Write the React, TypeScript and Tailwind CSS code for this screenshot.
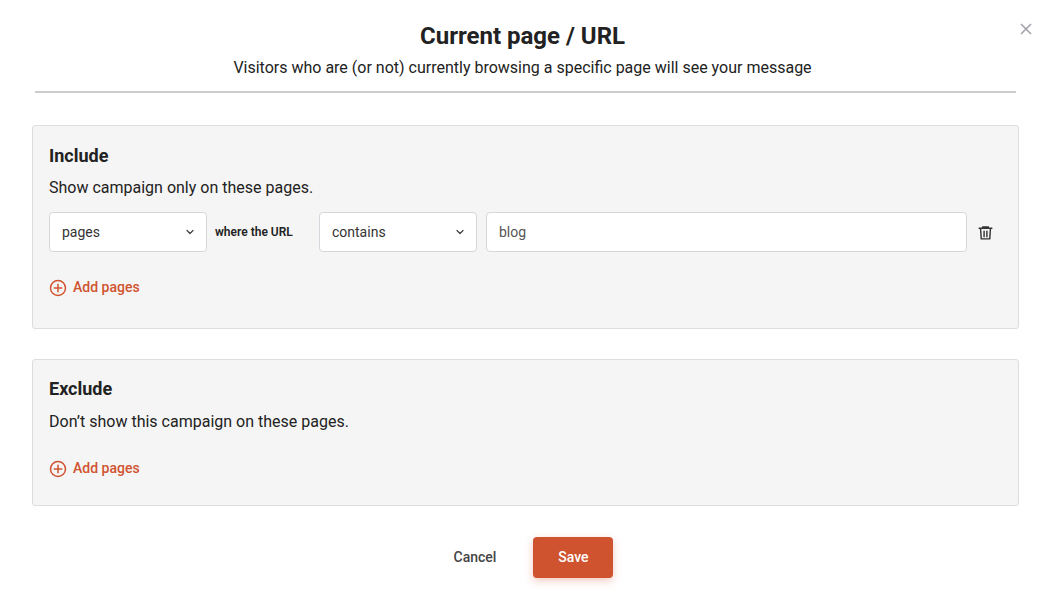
import React from "react";

const Chevron = () => (
  <svg width="12" height="12" viewBox="0 0 24 24" fill="none" stroke="#444" strokeWidth="2.5" strokeLinecap="round" strokeLinejoin="round"><path d="M6 9l6 6 6-6" /></svg>
);

const AddPages = () => (
  <button className="flex items-center gap-[6px] text-[14px] font-medium text-[#d05330]">
    <svg width="18" height="18" viewBox="0 0 24 24" fill="none" stroke="#d05330" strokeWidth="2" strokeLinecap="round"><circle cx="12" cy="12" r="10" /><path d="M12 7v10M7 12h10" /></svg>
    Add pages
  </button>
);

const Select = ({ v }: { v: string }) => (
  <div className="w-[158px] h-[40px] bg-white border border-[#d6d6dc] rounded-[4px] flex items-center justify-between pl-[12px] pr-[10px] text-[14px] text-[#333]">
    <span>{v}</span><Chevron />
  </div>
);

export default function App() {
  return (
    <div className="w-[1045px] h-[600px] bg-white relative text-[#222]" style={{ fontFamily: "Roboto, 'Liberation Sans', sans-serif" }}>
      <button className="absolute right-[12px] top-[22px] text-[#999]">
        <svg width="14" height="14" viewBox="0 0 14 14" stroke="#a0a0a8" strokeWidth="1.5"><path d="M2 2l10 10M12 2L2 12" /></svg>
      </button>
      <div className="pt-[22px] flex flex-col items-center">
        <h1 className="text-[24px] font-bold leading-[28px]">Current page / URL</h1>
        <p className="text-[16px] mt-[8px] leading-[20px]">Visitors who are (or not) currently browsing a specific page will see your message</p>
      </div>
      <div className="ml-[35px] w-[981px] mt-[13px] h-[2px] bg-[#ccc]" />
      <div className="ml-[32px] w-[987px] mt-[32px] border border-[#ddd] rounded-[3px] bg-[#f5f5f5] h-[204px] px-[16px] pt-[19px]">
        <h2 className="text-[18px] font-bold leading-[22px]">Include</h2>
        <p className="text-[16px] mt-[11px] leading-[20px]">Show campaign only on these pages.</p>
        <div className="flex items-center mt-[14px]">
          <Select v="pages" />
          <span className="text-[12px] font-semibold mx-[8px] w-[96px]">where the URL</span>
          <Select v="contains" />
          <div className="ml-[9px] w-[481px] h-[40px] bg-white border border-[#d6d6dc] rounded-[4px] flex items-center px-[12px] text-[14px] text-[#555]">blog</div>
          <svg className="ml-[10px]" width="17" height="17" viewBox="0 0 24 24" fill="none" stroke="#333" strokeWidth="2" strokeLinecap="round" strokeLinejoin="round"><path d="M3 6h18M8 6V4h8v2M5 6l1 15h12l1-15M10 10v8M14 10v8" /></svg>
        </div>
        <div className="mt-[25px]"><AddPages /></div>
      </div>
      <div className="ml-[32px] w-[987px] mt-[30px] border border-[#ddd] rounded-[3px] bg-[#f5f5f5] h-[147px] px-[16px] pt-[18px]">
        <h2 className="text-[18px] font-bold leading-[22px]">Exclude</h2>
        <p className="text-[16px] mt-[12px] leading-[20px]">Don’t show this campaign on these pages.</p>
        <div className="mt-[26px]"><AddPages /></div>
      </div>
      <div className="flex justify-center items-center mt-[31px] gap-[35px] pl-[20px]">
        <button className="text-[14px] font-medium text-[#444] px-[2px]">Cancel</button>
        <button className="w-[80px] h-[41px] bg-[#d05330] rounded-[4px] text-white text-[14px] font-medium shadow-[0_3px_8px_rgba(208,83,48,0.3)]">Save</button>
      </div>
    </div>
  );
}
